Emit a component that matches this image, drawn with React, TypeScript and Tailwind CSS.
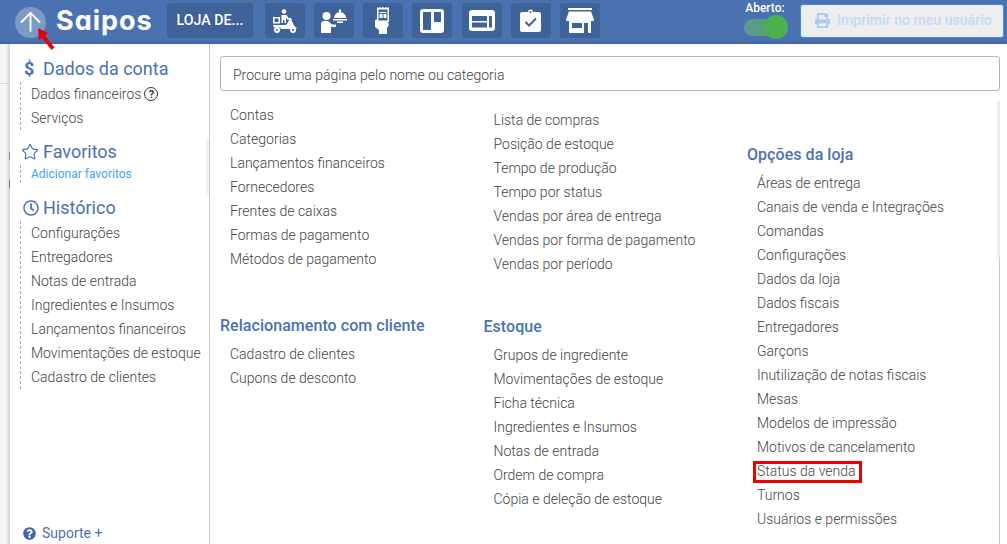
import React from "react";
import { ArrowUp, Star } from "lucide-react";
import { FaQuestionCircle, FaRegClock, FaPrint } from "react-icons/fa";

function Tile({ children }: { children: React.ReactNode }) {
  return (
    <div className="flex h-[35px] w-[40px] shrink-0 items-center justify-center rounded-[3px] bg-[#3f6299]">
      {children}
    </div>
  );
}

const Moto = () => (
  <svg width="26" height="24" viewBox="0 0 26 24" fill="#fff">
    <circle cx="12" cy="2.500" r="2.300" />
    <path d="M9.500 6h5l2 3h3v1.500h-4L14 9v5h-1.500v-3h-1.500v3H9.500z" />
    <path fillRule="evenodd" d="M1 8h7v6.500H1zM2.500 9.500v3.500h4V9.500z" />
    <path d="M1 16h12.500l1.500-1 2.500-5h1.500l3 6.500 2.500 2.500v1H8.500v-1.500H2z" />
    <path fillRule="evenodd" d="M5 18a3 3 0 1 1 0 6 3 3 0 0 1 0-6zm0 2a1 1 0 1 0 0 2 1 1 0 0 0 0-2z" />
    <path fillRule="evenodd" d="M21 18a3 3 0 1 1 0 6 3 3 0 0 1 0-6zm0 2a1 1 0 1 0 0 2 1 1 0 0 0 0-2z" />
  </svg>
);
const Waiter = () => (
  <svg width="26" height="24" viewBox="0 0 26 24" fill="#fff">
    <circle cx="5.500" cy="7" r="4" />
    <path d="M0 24v-9c0-2 1.500-3 3-3h4l4 3.500h4V18h-4l-1-1v7z" />
    <path d="M13 9a6 6 0 0 1 12 0zM12 10h14v1.500H12z" />
    <path d="M18 1l1-1 1 1v2h-2z" />
    <rect x="16" y="12.500" width="6" height="1.500" />
  </svg>
);
const Receipt = () => (
  <svg width="16" height="27" viewBox="0 0 16 27" fill="#fff">
    <path fillRule="evenodd" d="M2 0l1.500 1L5 0l1.500 1L8 0l1.500 1L11 0l1.500 1L14 0v15H2zM3.500 2.500v11h9v-11z" />
    <rect x="4.500" y="5" width="7" height="1" />
    <rect x="4.500" y="7" width="3" height="4" />
    <rect x="8.500" y="7" width="3" height="4" />
    <path d="M0 13l3-1v3h10l1 3-2 3v6H4v-4l-4-3z" />
  </svg>
);
const Board = () => (
  <svg width="24" height="24" viewBox="0 0 24 24">
    <rect width="24" height="24" rx="3" fill="#fff" />
    <rect x="3" y="3" width="8" height="18" fill="#3f6299" />
    <rect x="14" y="3" width="7" height="10" fill="#3f6299" />
  </svg>
);
const Panel = () => (
  <svg width="26" height="21" viewBox="0 0 26 21">
    <rect width="26" height="21" rx="3" fill="#fff" />
    <rect x="3" y="6" width="15" height="5" fill="#3f6299" />
    <rect x="3" y="12.500" width="15" height="5" fill="#3f6299" />
    <rect x="20" y="6" width="3" height="11.500" fill="#3f6299" />
  </svg>
);
const Clip = () => (
  <svg width="21" height="23" viewBox="0 0 21 23">
    <path d="M2 3h6a2.500 2.500 0 0 1 5 0h6a2 2 0 0 1 2 2v16a2 2 0 0 1-2 2H2a2 2 0 0 1-2-2V5a2 2 0 0 1 2-2z" fill="#fff" />
    <circle cx="10.500" cy="3" r="1" fill="#3f6299" />
    <path d="M5.500 13l3.500 3.500 7-7" fill="none" stroke="#3f6299" strokeWidth="2" />
  </svg>
);
const Store = () => (
  <svg width="28" height="25" viewBox="0 0 28 25">
    <rect x="2" y="0" width="24" height="2" fill="#fff" />
    <path d="M3 3.500h22l3 8a1.500 1.500 0 0 1-1.500 1.500h-25A1.500 1.500 0 0 1 0 11.500z" fill="#fff" />
    <path d="M3 13h22v12H3z" fill="#fff" />
    <rect x="6" y="15" width="10" height="5" fill="#3f6299" />
    <rect x="18" y="15" width="4" height="10" fill="#3f6299" />
  </svg>
);

function SideHead({ icon, children }: { icon: React.ReactNode; children: React.ReactNode }) {
  return (
    <div className="flex h-[24px] items-center pl-[11px] text-[18px] leading-[24px] text-[#4a72b0]">
      <span className="flex w-[22px] shrink-0 items-center">{icon}</span>
      <span>{children}</span>
    </div>
  );
}

function SideList({ items }: { items: React.ReactNode[] }) {
  return (
    <ul className="ml-[10px] border-l border-dashed border-[#aaaaaa] pl-[10px] text-[14px] font-light leading-[24px] text-[#444444]">
      {items.map((it, i) => (
        <li key={i} className="h-[24px] whitespace-nowrap">{it}</li>
      ))}
    </ul>
  );
}

function Col({ title, items, className }: { title?: string; items: string[]; className?: string }) {
  return (
    <div className={className}>
      {title && <h3 className="mb-[4px] h-[24px] whitespace-nowrap text-[16px] font-medium leading-[24px] tracking-[0.05px] text-[#4a72b0]">{title}</h3>}
      <ul className="pl-[10px] text-[14px] font-light leading-[24px] text-[#444444]">
        {items.map((it) => (
          <li key={it} className="h-[24px] whitespace-nowrap">
            {it === "Status da venda" ? (
              <span className="relative">
                {it}
                <span className="absolute bottom-[-4px] left-[-4px] right-[-6px] top-[-2px] border-[3px] border-[#ee0000]" />
              </span>
            ) : it}
          </li>
        ))}
      </ul>
    </div>
  );
}

export default function App() {
  return (
    <div className="relative flex h-[544px] w-[1007px] flex-col overflow-hidden bg-white font-['Roboto',sans-serif]">
      <header className="z-10 flex h-[44px] shrink-0 items-center bg-gradient-to-b from-[#4a72b0] from-90% to-[#41659d] pb-[3px] pl-[15px]">
        <div className="mt-[3px] flex h-[31px] w-[31px] shrink-0 items-center justify-center rounded-full bg-[#7d9ac7]">
          <ArrowUp size={32} color="#fff" strokeWidth={1.4} />
        </div>
        <div className="ml-[10px] w-[111px] font-['Inter',sans-serif] text-[27px] font-bold leading-[40px] tracking-[1px] text-white [font-feature-settings:'cv11']">Saipos</div>
        <div className="flex h-[35px] w-[86px] shrink-0 items-center justify-center rounded-[3px] bg-[#3f6299] text-[14.2px] font-medium text-white">LOJA DE...</div>
        <div className="ml-[12px] flex gap-[9.170px]">
          <Tile><Moto /></Tile>
          <Tile><Waiter /></Tile>
          <Tile><Receipt /></Tile>
          <Tile><Board /></Tile>
          <Tile><Panel /></Tile>
          <Tile><Clip /></Tile>
          <Tile><Store /></Tile>
        </div>
        <div className="mb-[1px] ml-[142px] flex w-[46px] shrink-0 flex-col items-center">
          <span className="h-[14px] text-[12px] font-medium leading-[14px] text-white">Aberto:</span>
          <div className="relative h-[24px] w-[46px]">
            <div className="absolute left-[2px] top-[4px] h-[17px] w-[38px] rounded-full bg-gradient-to-r from-[#5f9a8e] to-[#4f9f6e]" />
            <div className="absolute right-0 top-0 h-[24px] w-[24px] rounded-full bg-[#4caf50]" />
          </div>
        </div>
        <button className="ml-[12px] flex h-[34px] w-[204px] shrink-0 items-center justify-center gap-[7px] rounded-[3px] border border-[#3b8fe8] bg-[#eeeeee] pl-[3px] text-[14.1px] font-medium text-[#c3dcf7]">
          <FaPrint size={15} color="#a9cdf2" />
          Imprimir no meu usuário
        </button>
      </header>

      <div className="flex min-h-0 flex-1">
        <div className="flex w-[10px] shrink-0 flex-col bg-gradient-to-r from-[#f6f6f6] from-60% to-[#cfcfcf]">
          <div className="h-[40px] shrink-0 border-b border-[#d8d8d8]" />
          <div className="mt-[68px] h-[8px] w-[1px] self-end bg-[#a08c78]" />
          <div className="mt-[20px] h-[8px] w-[1px] self-end bg-[#8c6f80]" />
        </div>
        <aside className="relative flex w-[200px] shrink-0 flex-col border-r border-[#c8c8c8] pt-[13px]">
          <SideHead icon={<span className="pl-[3px] text-[18px] font-bold leading-[24px]">$</span>}>Dados da conta</SideHead>
          <div className="mt-[1px]">
            <SideList
              items={[
                <span className="flex items-center gap-[3px]">Dados financeiros <span className="flex h-[14px] w-[14px] items-center justify-center rounded-full border border-[#333333] text-[11px] font-bold leading-none text-[#333333]">?</span></span>,
                "Serviços",
              ]}
            />
          </div>
          <div className="mt-[10px]">
            <SideHead icon={<Star size={18} color="#4a72b0" strokeWidth={1.6} />}>Favoritos</SideHead>
          </div>
          <div className="text-[12px]">
            <ul className="ml-[10px] mt-[1px] border-l border-dashed border-[#aaaaaa] pl-[10px] leading-[18px] text-[#42a5f5]">
              <li>Adicionar favoritos</li>
            </ul>
          </div>
          <div className="mt-[13px]">
            <SideHead icon={<FaRegClock size={16} color="#4a72b0" className="ml-[2px]" />}>Histórico</SideHead>
          </div>
          <div className="mt-[1px]">
            <SideList
              items={[
                "Configurações",
                "Entregadores",
                "Notas de entrada",
                "Ingredientes e Insumos",
                "Lançamentos financeiros",
                "Movimentações de estoque",
                "Cadastro de clientes",
              ]}
            />
          </div>
          <div className="mt-auto flex h-[22px] items-center gap-[6px] pl-[13px] text-[14px] text-[#4a72b0]">
            <FaQuestionCircle size={13} color="#3f68a8" />
            Suporte +
          </div>
          <div className="absolute right-0 top-[95px] h-[56px] w-[3px] bg-[#f0f0f0]" />
        </aside>

        <main className="flex min-w-0 flex-1 flex-col pl-[10px] pt-[12px]">
          <div className="flex h-[35px] w-[780px] items-center rounded-[3px] border border-[#b5b5b5] pl-[12px] pt-[3px] text-[14px] font-light text-[#444444]">
            Procure uma página pelo nome ou categoria
          </div>
          <div className="mt-[12px] flex flex-1">
            <div className="w-[263.500px] shrink-0">
              <Col items={["Contas", "Categorias", "Lançamentos financeiros", "Fornecedores", "Frentes de caixas", "Formas de pagamento", "Métodos de pagamento"]} />
              <Col className="mt-[43px]" title="Relacionamento com cliente" items={["Cadastro de clientes", "Cupons de desconto"]} />
            </div>
            <div className="w-[263.500px] shrink-0 pt-[5px]">
              <Col items={["Lista de compras", "Posição de estoque", "Tempo de produção", "Tempo por status", "Vendas por área de entrega", "Vendas por forma de pagamento", "Vendas por período"]} />
              <Col className="mt-[39px]" title="Estoque" items={["Grupos de ingrediente", "Movimentações de estoque", "Ficha técnica", "Ingredientes e Insumos", "Notas de entrada", "Ordem de compra", "Cópia e deleção de estoque"]} />
            </div>
            <div className="w-[250px] shrink-0 pt-[40px]">
              <Col title="Opções da loja" items={["Áreas de entrega", "Canais de venda e Integrações", "Comandas", "Configurações", "Dados da loja", "Dados fiscais", "Entregadores", "Garçons", "Inutilização de notas fiscais", "Mesas", "Modelos de impressão", "Motivos de cancelamento", "Status da venda", "Turnos", "Usuários e permissões"]} />
            </div>
            <div className="-mt-[2px] flex w-[3px] shrink-0 flex-col items-end">
              <div className="h-[156px] w-[3px] shrink-0 bg-[#eeeeee]" />
              <div className="w-[1.500px] flex-1 bg-[#c8c8c8]" />
            </div>
          </div>
        </main>
      </div>

      <svg className="absolute left-[36px] top-[26px] z-20" width="22" height="26" viewBox="0 0 22 26">
        <path d="M2 2l10 5-3 2.500 9.500 12-3 2.500-9.500-12-3 2.500z" fill="#e8000b" />
      </svg>
    </div>
  );
}
